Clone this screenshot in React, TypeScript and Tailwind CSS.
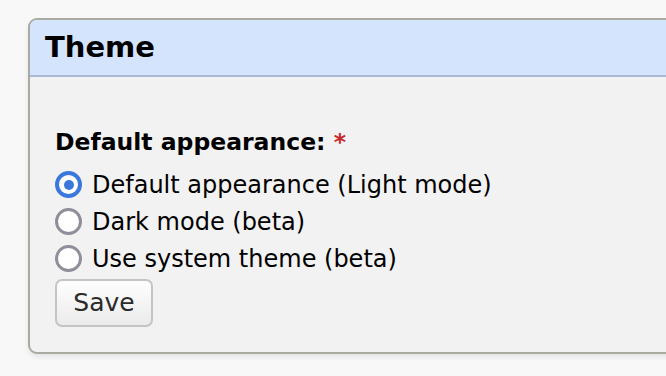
import React from "react";

function Radio({ checked }: { checked?: boolean }) {
  if (checked) {
    return (
      <span className="flex h-[27px] w-[27px] shrink-0 items-center justify-center rounded-full border-[4px] border-[#3b78dc] bg-white">
        <span className="h-[10px] w-[10px] rounded-full bg-[#3b78dc]" />
      </span>
    );
  }
  return <span className="h-[27px] w-[27px] shrink-0 rounded-full border-[3.5px] border-[#8f8e9a] bg-white" />;
}

export default function App() {
  const options = [
    { label: "Default appearance (Light mode)", checked: true },
    { label: "Dark mode (beta)", checked: false },
    { label: "Use system theme (beta)", checked: false },
  ];
  return (
    <div
      className="h-[376px] w-full overflow-hidden bg-[#f8f8f8] pl-[28px] pt-[18px] text-black"
      style={{ fontFamily: '"DejaVu Sans", Verdana, sans-serif' }}
    >
      <div className="w-[700px] overflow-hidden rounded-[9px] border-2 border-[#a9aba1] bg-[#f2f2f2] shadow-[0_3px_5px_rgba(0,0,0,0.08)]">
        <div className="flex h-[57px] items-center border-b-2 border-[#a9b8d4] bg-[#d4e4fc] pl-[15px]">
          <h2 className="text-[29px] font-bold leading-none">Theme</h2>
        </div>
        <div className="pb-[25px] pl-[25px] pt-[47px]">
          <div className="mb-[5px] text-[23.5px] font-bold leading-[37px]">
            Default appearance: <span className="text-[#c8262b]">*</span>
          </div>
          <div className="flex flex-col">
            {options.map((o) => (
              <label key={o.label} className="flex h-[37px] items-center gap-[10px] text-[24px]">
                <Radio checked={o.checked} />
                <span>{o.label}</span>
              </label>
            ))}
          </div>
          <button className="mt-[2px] flex h-[48px] w-[98px] items-center justify-center rounded-[7px] border-2 border-[#c4c4c4] bg-gradient-to-b from-[#fefefe] to-[#ebebeb] text-[25px] text-[#2b2b2b]">
            Save
          </button>
        </div>
      </div>
    </div>
  );
}
